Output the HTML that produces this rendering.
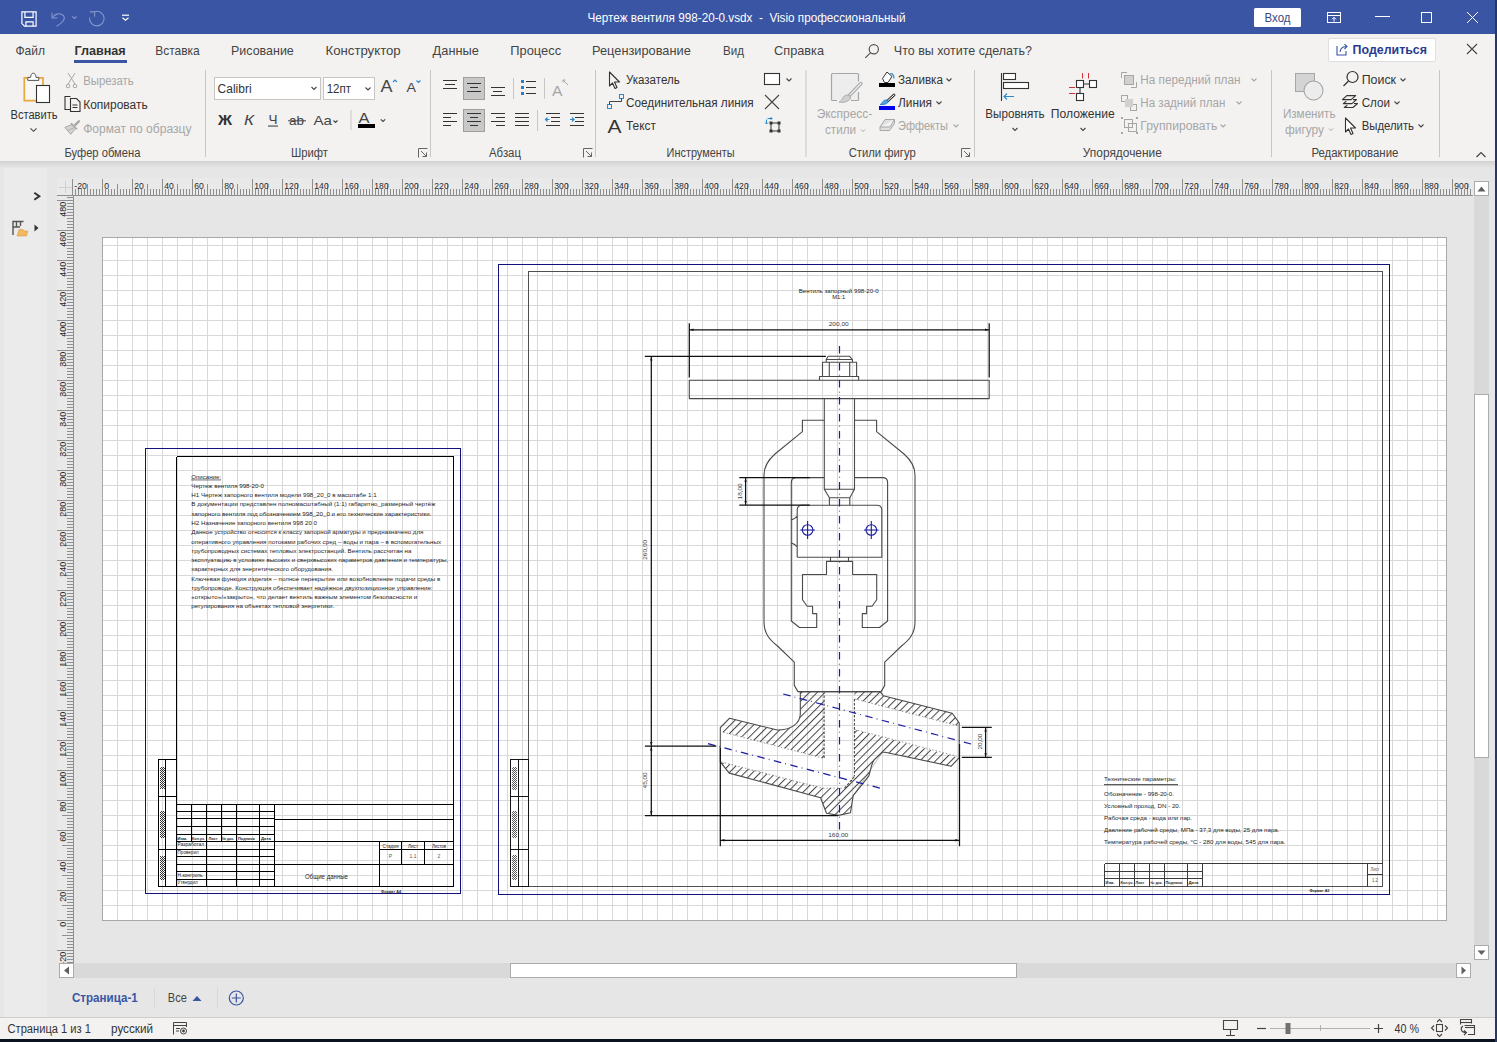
<!DOCTYPE html><html><head><meta charset="utf-8"><style>html,body{margin:0;padding:0;width:1497px;height:1042px;overflow:hidden;background:#E6E6E6}svg{display:block;font-family:"Liberation Sans",sans-serif}</style></head><body><svg width="1497" height="1042" viewBox="0 0 1497 1042"><rect x="0" y="0" width="1497" height="1042" fill="#E6E6E6"/>
<rect x="0" y="0" width="1497" height="34" fill="#3955A3"/>
<rect x="0" y="34" width="1497" height="127" fill="#F3F2F1"/>
<defs><linearGradient id="rsh" x1="0" y1="0" x2="0" y2="1"><stop offset="0" stop-color="#D2D2D2"/><stop offset="1" stop-color="#E6E6E6"/></linearGradient></defs>
<rect x="0" y="161" width="1497" height="7" fill="url(#rsh)"/>
<rect x="4" y="168" width="43" height="849" fill="#EBEBEB"/>
<rect x="0" y="1018" width="1497" height="21" fill="#F3F2F1"/>
<rect x="0" y="1017" width="1497" height="1" fill="#CFCDCB"/>
<rect x="0" y="1039" width="1497" height="3" fill="#0B1220"/>
<rect x="1495" y="0" width="2" height="1042" fill="#283766"/>
<g fill="none" stroke="#FFFFFF" stroke-width="1.2"><path d="M21.9 11.9H36.1V26.1H24.4L21.9 23.6Z"/><path d="M24.9 11.9V17.3H33.1V11.9"/><path d="M25.9 26.1V21.9H33.1V26.1"/></g>
<g fill="none" stroke="#8497CF" stroke-width="1.1"><path d="M52 12.5V18H57.5"/><path d="M52.5 17.5C55 13.5 60.5 12.5 63.3 15.5C65.5 18 64.5 21.5 56.5 26.3"/><path d="M72.2 16.4L74.5 18.4L76.8 16.4"/><path d="M89.8 11.9H94.6V16.8"/><path d="M94.3 11.7A7.3 7.3 0 1 1 89.6 17.5"/></g>
<g fill="none" stroke="#FFFFFF" stroke-width="1.2"><path d="M122 15.2H129"/><path d="M122.5 17.8L125.5 20.3L128.5 17.8"/></g>
<text x="587.5" y="22.2" font-size="12.5" fill="#FFFFFF" textLength="318" lengthAdjust="spacingAndGlyphs" xml:space="preserve">Чертеж вентиля 998-20-0.vsdx  -  Visio профессиональный</text>
<rect x="1254" y="8" width="47" height="19" rx="1.5" fill="#FFFFFF"/>
<text x="1277.5" y="22" font-size="12.5" fill="#3A4A80" text-anchor="middle" textLength="26" lengthAdjust="spacingAndGlyphs">Вход</text>
<g fill="none" stroke="#FFFFFF" stroke-width="1"><rect x="1327.5" y="12.5" width="13" height="10"/><path d="M1327.5 15.5H1340.5"/><path d="M1334 21.5V17.5M1332 19.3L1334 17.3L1336 19.3"/><path d="M1375 16.5H1390"/><rect x="1421.5" y="12.5" width="10" height="10"/><path d="M1467 12L1478 23M1478 12L1467 23"/></g>
<text x="15.4" y="55" font-size="13.5" fill="#444444" textLength="29.5" lengthAdjust="spacingAndGlyphs">Файл</text>
<text x="155.2" y="55" font-size="13.5" fill="#444444" textLength="44.6" lengthAdjust="spacingAndGlyphs">Вставка</text>
<text x="231" y="55" font-size="13.5" fill="#444444" textLength="62.8" lengthAdjust="spacingAndGlyphs">Рисование</text>
<text x="325.5" y="55" font-size="13.5" fill="#444444" textLength="75.2" lengthAdjust="spacingAndGlyphs">Конструктор</text>
<text x="432.6" y="55" font-size="13.5" fill="#444444" textLength="46.3" lengthAdjust="spacingAndGlyphs">Данные</text>
<text x="510.3" y="55" font-size="13.5" fill="#444444" textLength="50.8" lengthAdjust="spacingAndGlyphs">Процесс</text>
<text x="592" y="55" font-size="13.5" fill="#444444" textLength="98.8" lengthAdjust="spacingAndGlyphs">Рецензирование</text>
<text x="723" y="55" font-size="13.5" fill="#444444" textLength="21" lengthAdjust="spacingAndGlyphs">Вид</text>
<text x="774.1" y="55" font-size="13.5" fill="#444444" textLength="49.9" lengthAdjust="spacingAndGlyphs">Справка</text>
<text x="74.4" y="55" font-size="13.5" fill="#333333" textLength="51.3" lengthAdjust="spacingAndGlyphs" font-weight="bold">Главная</text>
<rect x="74" y="60" width="53" height="3" fill="#3955A3"/>
<g fill="none" stroke="#555555" stroke-width="1.2"><circle cx="873.8" cy="49.3" r="4.6"/><path d="M870.6 52.6L865.3 57.9"/></g>
<text x="893.8" y="55" font-size="13" fill="#444444" textLength="138.2" lengthAdjust="spacingAndGlyphs">Что вы хотите сделать?</text>
<rect x="1328.5" y="38.5" width="107" height="23" rx="1.5" fill="#FFFFFF" stroke="#E1DFDD"/>
<g fill="none" stroke="#3955A3" stroke-width="1.1"><path d="M1337 46V55H1346V51"/><path d="M1340 52C1340.5 48 1343 46.5 1346.5 46.5M1344.5 44.2L1347 46.5L1344.5 49"/></g>
<text x="1352.6" y="54.3" font-size="13.4" fill="#2B3C8E" textLength="74.4" lengthAdjust="spacingAndGlyphs" font-weight="bold">Поделиться</text>
<path d="M1467 44L1477 54M1477 44L1467 54" stroke="#444444" stroke-width="1.1" fill="none"/>
<rect x="205.0" y="70" width="1" height="87" fill="#C8C6C4"/>
<rect x="430.0" y="70" width="1" height="87" fill="#C8C6C4"/>
<rect x="595.0" y="70" width="1" height="87" fill="#C8C6C4"/>
<rect x="805.5" y="70" width="1" height="87" fill="#C8C6C4"/>
<rect x="974.0" y="70" width="1" height="87" fill="#C8C6C4"/>
<rect x="1271.0" y="70" width="1" height="87" fill="#C8C6C4"/>
<rect x="1439.0" y="70" width="1" height="87" fill="#C8C6C4"/>
<text x="102.4" y="157" font-size="12" fill="#444444" text-anchor="middle" textLength="76" lengthAdjust="spacingAndGlyphs">Буфер обмена</text>
<text x="309.4" y="157" font-size="12" fill="#444444" text-anchor="middle" textLength="37" lengthAdjust="spacingAndGlyphs">Шрифт</text>
<text x="505" y="157" font-size="12" fill="#444444" text-anchor="middle" textLength="32" lengthAdjust="spacingAndGlyphs">Абзац</text>
<text x="700.6" y="157" font-size="12" fill="#444444" text-anchor="middle" textLength="68" lengthAdjust="spacingAndGlyphs">Инструменты</text>
<text x="882.2" y="157" font-size="12" fill="#444444" text-anchor="middle" textLength="67" lengthAdjust="spacingAndGlyphs">Стили фигур</text>
<text x="1122.3" y="157" font-size="12" fill="#444444" text-anchor="middle" textLength="79" lengthAdjust="spacingAndGlyphs">Упорядочение</text>
<text x="1354.9" y="157" font-size="12" fill="#444444" text-anchor="middle" textLength="87" lengthAdjust="spacingAndGlyphs">Редактирование</text>
<g fill="none" stroke="#666666" stroke-width="1"><path d="M418.5 157.5V148.5H427.5"/><path d="M421 151L426.5 156.5M426.5 152.5V156.5H422.5"/></g>
<g fill="none" stroke="#666666" stroke-width="1"><path d="M583.5 157.5V148.5H592.5"/><path d="M586 151L591.5 156.5M591.5 152.5V156.5H587.5"/></g>
<g fill="none" stroke="#666666" stroke-width="1"><path d="M961.5 157.5V148.5H970.5"/><path d="M964 151L969.5 156.5M969.5 152.5V156.5H965.5"/></g>
<path d="M1476.5 157L1481 152.5L1485.5 157" fill="none" stroke="#444444" stroke-width="1.2"/>
<path d="M24.3 77.8H43V85H36.5V100.7H24.3Z" fill="#F7F7F7"/>
<path d="M29 77.8H24.3V100.7H36.5M37.5 77.8H43V85.5" fill="none" stroke="#E9A83A" stroke-width="1.7"/>
<path d="M27.8 80.4V77.4H30.6C30.8 74.6 31.8 73.2 33.3 73.2C34.8 73.2 35.8 74.6 36 77.4H38.8V80.4Z" fill="#FFFFFF" stroke="#555555" stroke-width="1"/>
<rect x="36.5" y="85.5" width="13" height="17" fill="#FFFFFF" stroke="#333333" stroke-width="1.1"/>
<text x="34" y="119" font-size="12.5" fill="#333333" text-anchor="middle" textLength="47" lengthAdjust="spacingAndGlyphs">Вставить</text>
<path d="M30.5 128.3L33.5 131.3L36.5 128.3" fill="none" stroke="#444444" stroke-width="1.1"/>
<g fill="none" stroke="#A6A6A6" stroke-width="1"><path d="M68 73L75 84M75 73L68 84"/><circle cx="68" cy="86" r="1.8"/><circle cx="75" cy="86" r="1.8"/></g>
<text x="83.2" y="85" font-size="12.5" fill="#A6A6A6" textLength="50.5" lengthAdjust="spacingAndGlyphs">Вырезать</text>
<g fill="none" stroke="#333333" stroke-width="1.1"><path d="M71 109.5H65V96.5H70.5"/><path d="M70.5 98.5H76.5L80 102V111.5H70.5Z"/><path d="M72.5 105H77.5M72.5 107.5H77.5"/></g>
<text x="83.2" y="109" font-size="12.5" fill="#333333" textLength="64.5" lengthAdjust="spacingAndGlyphs">Копировать</text>
<g stroke="#A6A6A6" stroke-linejoin="round" stroke-linecap="round"><path d="M79 121.2L75.3 124.9" stroke-width="2.3" fill="none"/><path d="M71.8 124.6L64.8 127.4L70.8 134.2L75.6 128.4Z" fill="#D4D4D4" stroke-width="1"/><path d="M71.4 123.6L76.6 128.8" stroke-width="1.6" fill="none"/><path d="M67.5 130.5L73.5 128" stroke-width="0.8" fill="none"/></g>
<text x="83.2" y="132.5" font-size="12.5" fill="#A6A6A6" textLength="108.3" lengthAdjust="spacingAndGlyphs">Формат по образцу</text>
<rect x="214.5" y="77.5" width="106" height="22" fill="#FFFFFF" stroke="#C8C6C4"/>
<text x="217.6" y="93" font-size="12.5" fill="#333333" textLength="34" lengthAdjust="spacingAndGlyphs">Calibri</text>
<path d="M311.5 87L314 89.5L316.5 87" fill="none" stroke="#444444" stroke-width="1.1"/>
<rect x="323.5" y="77.5" width="51" height="22" fill="#FFFFFF" stroke="#C8C6C4"/>
<text x="326.7" y="93" font-size="12.5" fill="#333333" textLength="24.3" lengthAdjust="spacingAndGlyphs">12пт</text>
<path d="M365.5 87.5L368 90L370.5 87.5" fill="none" stroke="#444444" stroke-width="1.1"/>
<text x="380.5" y="92" font-size="17" fill="#444444" textLength="12" lengthAdjust="spacingAndGlyphs">A</text>
<path d="M393 82L395 80L397 82" fill="none" stroke="#2B8AD0" stroke-width="1.1"/>
<text x="406.5" y="92.2" font-size="13.5" fill="#444444" textLength="9.5" lengthAdjust="spacingAndGlyphs">A</text>
<path d="M416.5 80.5L418.5 82.5L420.5 80.5" fill="none" stroke="#2B8AD0" stroke-width="1.1"/>
<text x="218" y="124.5" font-size="14" fill="#333333" textLength="14" lengthAdjust="spacingAndGlyphs" font-weight="bold">Ж</text>
<text x="244" y="124.5" font-size="14" fill="#444444" textLength="10" lengthAdjust="spacingAndGlyphs" font-style="italic">К</text>
<text x="268.5" y="123.5" font-size="13.5" fill="#444444" textLength="9" lengthAdjust="spacingAndGlyphs">Ч</text>
<rect x="268" y="125.5" width="10" height="1.1" fill="#444444"/>
<text x="289" y="124.5" font-size="13.5" fill="#444444" textLength="15" lengthAdjust="spacingAndGlyphs">ab</text>
<rect x="288" y="120.3" width="18" height="1" fill="#444444"/>
<text x="313.5" y="124.5" font-size="13.5" fill="#444444" textLength="18.5" lengthAdjust="spacingAndGlyphs">Aa</text>
<path d="M333.5 120.5L335.5 122.5L337.5 120.5" fill="none" stroke="#444444" stroke-width="1.1"/>
<rect x="350.5" y="110" width="1" height="20" fill="#C8C6C4"/>
<text x="358.5" y="123" font-size="14" fill="#444444" textLength="11" lengthAdjust="spacingAndGlyphs">A</text>
<rect x="358" y="124" width="17" height="4" fill="#000000"/>
<path d="M380.8 119.3L383 121.5L385.2 119.3" fill="none" stroke="#444444" stroke-width="1.1"/>
<rect x="463.5" y="77.5" width="21" height="22" fill="#C8C8C8" stroke="#9E9E9E"/>
<rect x="463.5" y="109.5" width="21" height="22" fill="#C8C8C8" stroke="#9E9E9E"/>
<path d="M443 80.5H457M445 84.5H454.5M443 88.5H457M467 83.5H481M470 87.5H478M467 91.5H481M491 87.5H505M493 91.5H502M491 95.5H505M443 113.5H457M443 117.5H451M443 121.5H457M443 125.5H451M467 113.5H481M470 117.5H478M467 121.5H481M470 125.5H478M491 113.5H505M496 117.5H505M491 121.5H505M496 125.5H505M515 113.5H529M515 117.5H529M515 121.5H529M515 125.5H529M526 81.5H536M526 87.5H536M526 93.5H536M546 113.5H560M551 117.5H560M551 121.5H560M546 125.5H560M570 113.5H584M575 117.5H584M575 121.5H584M570 125.5H584" stroke="#333333" stroke-width="1" fill="none" shape-rendering="crispEdges"/>
<g fill="#2B7FC4"><rect x="521" y="80" width="3" height="3"/><rect x="521" y="86" width="3" height="3"/><rect x="521" y="92" width="3" height="3"/></g>
<g fill="none" stroke="#2B8AD0" stroke-width="1.2"><path d="M549.5 119.5H545.5M547.5 117.5L545.5 119.5L547.5 121.5"/><path d="M570 119.5H574M572 117.5L574 119.5L572 121.5"/></g>
<rect x="513" y="78" width="1" height="21" fill="#C8C6C4"/><rect x="544" y="78" width="1" height="21" fill="#C8C6C4"/><rect x="537" y="110" width="1" height="21" fill="#C8C6C4"/>
<text x="552" y="96" font-size="14" fill="#A6A6A6" textLength="10.5" lengthAdjust="spacingAndGlyphs">A</text>
<path d="M563 80L565.5 80M563 80L563 82.5M563 80L568 85" fill="none" stroke="#A6A6A6" stroke-width="1"/>
<path d="M609.5 72V86L612.5 83L615 88.5L617 87.5L614.5 82H619.5Z" fill="none" stroke="#333333" stroke-width="1.1" stroke-linejoin="round"/>
<text x="625.9" y="84" font-size="12.5" fill="#333333" textLength="53.8" lengthAdjust="spacingAndGlyphs">Указатель</text>
<g fill="none" stroke="#2B8AD0" stroke-width="1"><rect x="607.5" y="104.5" width="4" height="4"/><rect x="619.5" y="94.5" width="4" height="4"/></g>
<path d="M609.5 104.5V101.5H621.5V98.5" fill="none" stroke="#444444" stroke-width="1"/>
<text x="626" y="107" font-size="12.5" fill="#333333" textLength="127.7" lengthAdjust="spacingAndGlyphs">Соединительная линия</text>
<text x="607.5" y="133" font-size="19" fill="#333333" textLength="14" lengthAdjust="spacingAndGlyphs">A</text>
<text x="626" y="130" font-size="12.5" fill="#333333" textLength="30" lengthAdjust="spacingAndGlyphs">Текст</text>
<rect x="764.5" y="73.5" width="15" height="11" fill="#FFFFFF" stroke="#333333" stroke-width="1.1"/>
<path d="M786.5 78.5L789 81L791.5 78.5" fill="none" stroke="#444444" stroke-width="1.1"/>
<path d="M765 95L779 109M779 95L765 109" fill="none" stroke="#444444" stroke-width="1.1"/>
<rect x="771" y="123" width="8" height="8" fill="none" stroke="#333333" stroke-width="1"/>
<g fill="#333333"><rect x="769.5" y="121.5" width="3" height="3"/><rect x="777.5" y="121.5" width="3" height="3"/><rect x="769.5" y="129.5" width="3" height="3"/><rect x="777.5" y="129.5" width="3" height="3"/></g>
<path d="M766.5 124V119.5M765 122.5L766.5 124L768 122.5M767.5 118.5H772M770.5 117L772 118.5L770.5 120" fill="none" stroke="#2B8AD0" stroke-width="1"/>
<rect x="831.5" y="73.5" width="27" height="27" rx="1" fill="#EDEDED" stroke="none"/>
<path d="M837 100.5H832.5Q831.5 100.5 831.5 99.5V74.5Q831.5 73.5 832.5 73.5H857.5Q858.5 73.5 858.5 74.5V81.5M858.5 92V99.5Q858.5 100.5 857.5 100.5H851" fill="none" stroke="#A6A6A6" stroke-width="1.2"/>
<path d="M861 83.5L849.5 95.3" stroke="#A6A6A6" stroke-width="3.4" stroke-linecap="round" fill="none"/><path d="M861 83.5L849.5 95.3" stroke="#F2F2F2" stroke-width="1.2" stroke-linecap="round" fill="none"/>
<path d="M850 96C847 93.5 843 96 842 99.5C841.5 101 840 101.5 839 102C843 103 848 102 850.5 98.5Z" fill="#CFCFCF" stroke="#A6A6A6" stroke-width="0.9"/>
<text x="816.7" y="118.2" font-size="12.5" fill="#A6A6A6" textLength="55.5" lengthAdjust="spacingAndGlyphs">Экспресс-</text>
<text x="825" y="134" font-size="12.5" fill="#A6A6A6" textLength="31" lengthAdjust="spacingAndGlyphs">стили</text>
<path d="M861 129.5L863 131.5L865 129.5" fill="none" stroke="#A6A6A6" stroke-width="1"/>
<path d="M882.5 78.5L887 72L892 76.5L888 82.5H884.5Z" fill="#FFFFFF" stroke="#333333" stroke-width="1"/><path d="M890 74C892.5 73 894 75 894 78.5" fill="none" stroke="#2B8AD0" stroke-width="1.2"/>
<rect x="879" y="83" width="16" height="4" fill="#000000"/>
<text x="898" y="84" font-size="12.5" fill="#333333" textLength="45" lengthAdjust="spacingAndGlyphs">Заливка</text>
<path d="M946.5 78.5L949 81L951.5 78.5" fill="none" stroke="#444444" stroke-width="1.1"/>
<path d="M894 95L887 101.5" stroke="#333333" stroke-width="2.8" stroke-linecap="round" fill="none"/><path d="M894 95L887 101.5" stroke="#FFFFFF" stroke-width="1" stroke-linecap="round" fill="none"/><path d="M887.8 100.5C885.5 99 882.5 101 882 103C881.5 104 880.5 104.3 880 104.5C883 105 886.5 104.5 888.3 102Z" fill="#4BA3E3" stroke="#1E6FB5" stroke-width="0.7"/>
<rect x="879" y="106" width="16" height="4" fill="#0000EE"/>
<text x="898" y="106.5" font-size="12.5" fill="#333333" textLength="34" lengthAdjust="spacingAndGlyphs">Линия</text>
<path d="M936.5 101.5L939 104L941.5 101.5" fill="none" stroke="#444444" stroke-width="1.1"/>
<path d="M880 127L885 119.5H894.5L890 127Z M880 127V130.5H889.5L894.5 123.5V119.5" fill="#E0E0E0" stroke="#A6A6A6" stroke-width="1"/>
<text x="898" y="130" font-size="12.5" fill="#A6A6A6" textLength="50" lengthAdjust="spacingAndGlyphs">Эффекты</text>
<path d="M953.5 124.5L956 127L958.5 124.5" fill="none" stroke="#A6A6A6" stroke-width="1.1"/>
<path d="M1001.5 73V101" stroke="#333333" stroke-width="1.1"/>
<rect x="1003.5" y="73.5" width="12" height="6" fill="#FFFFFF" stroke="#333333" stroke-width="1.1"/><rect x="1003.5" y="82.5" width="25" height="6" fill="#FFFFFF" stroke="#333333" stroke-width="1.1"/>
<path d="M1014 96.5H1004M1007 93.5L1004 96.5L1007 99.5" fill="none" stroke="#2B8AD0" stroke-width="1.1"/>
<text x="1015" y="117.7" font-size="12.5" fill="#333333" text-anchor="middle" textLength="59.3" lengthAdjust="spacingAndGlyphs">Выровнять</text>
<path d="M1012.5 128L1015 130.5L1017.5 128" fill="none" stroke="#444444" stroke-width="1.1"/>
<g fill="#FFFFFF" stroke="#333333" stroke-width="1.1"><rect x="1076.5" y="80.5" width="7" height="7"/><rect x="1089.5" y="80.5" width="7" height="7"/><rect x="1076.5" y="93.5" width="7" height="7"/></g>
<path d="M1083.5 84H1089.5M1080 87.5V93.5" stroke="#333333" stroke-width="1.1" fill="none"/>
<path d="M1082.5 73V78.5M1088.5 73V78.5M1069 87.5H1075M1069 93.5H1075" stroke="#D13438" stroke-width="1" fill="none"/>
<text x="1082.8" y="117.7" font-size="12.5" fill="#333333" text-anchor="middle" textLength="64" lengthAdjust="spacingAndGlyphs">Положение</text>
<path d="M1080.5 128L1083 130.5L1085.5 128" fill="none" stroke="#444444" stroke-width="1.1"/>
<g fill="none" stroke="#A6A6A6" stroke-width="1"><path d="M1121.5 78V72.5H1127M1131 87.5H1136.5V82"/><rect x="1124.5" y="75.5" width="9" height="9" fill="#D0D0D0"/></g>
<text x="1140.3" y="83.6" font-size="12.5" fill="#A6A6A6" textLength="100.2" lengthAdjust="spacingAndGlyphs">На передний план</text>
<path d="M1251.5 78.5L1254 81L1256.5 78.5" fill="none" stroke="#A6A6A6" stroke-width="1.1"/>
<g fill="none" stroke="#A6A6A6" stroke-width="1"><rect x="1121.5" y="95.5" width="6" height="6"/><rect x="1130.5" y="104.5" width="6" height="6"/><rect x="1125" y="99" width="8" height="8" fill="#D0D0D0" stroke="none"/></g>
<text x="1140.3" y="106.5" font-size="12.5" fill="#A6A6A6" textLength="85" lengthAdjust="spacingAndGlyphs">На задний план</text>
<path d="M1236.5 101.5L1239 104L1241.5 101.5" fill="none" stroke="#A6A6A6" stroke-width="1.1"/>
<g fill="none" stroke="#A6A6A6" stroke-width="1"><rect x="1124.5" y="119.5" width="8" height="8"/><rect x="1128.5" y="123.5" width="8" height="8"/></g><g fill="#A6A6A6"><rect x="1121" y="117" width="2" height="2"/><rect x="1136" y="117" width="2" height="2"/><rect x="1121" y="132" width="2" height="2"/><rect x="1136" y="132" width="2" height="2"/></g>
<text x="1140.3" y="129.5" font-size="12.5" fill="#A6A6A6" textLength="77" lengthAdjust="spacingAndGlyphs">Группировать</text>
<path d="M1220.5 124.5L1223 127L1225.5 124.5" fill="none" stroke="#A6A6A6" stroke-width="1.1"/>
<rect x="1295.5" y="73.5" width="19" height="18" fill="#D4D4D4" stroke="#A6A6A6" stroke-width="1"/>
<circle cx="1313.5" cy="90.5" r="9.5" fill="#ECECEC" stroke="#A6A6A6" stroke-width="1.1"/>
<text x="1282.9" y="118.2" font-size="12.5" fill="#A6A6A6" textLength="52.6" lengthAdjust="spacingAndGlyphs">Изменить</text>
<text x="1285" y="134" font-size="12.5" fill="#A6A6A6" textLength="39" lengthAdjust="spacingAndGlyphs">фигуру</text>
<path d="M1329 128.5L1331 130.5L1333 128.5" fill="none" stroke="#A6A6A6" stroke-width="1"/>
<g fill="none" stroke="#333333" stroke-width="1.2"><circle cx="1352.5" cy="77" r="5.5"/><path d="M1348.5 81L1343.5 86"/></g>
<text x="1361.7" y="84" font-size="12.5" fill="#333333" textLength="34.3" lengthAdjust="spacingAndGlyphs">Поиск</text>
<path d="M1400.5 78.5L1403 81L1405.5 78.5" fill="none" stroke="#444444" stroke-width="1.1"/>
<g fill="none" stroke="#333333" stroke-width="1.1" stroke-linejoin="round"><path d="M1346.8 95.6H1355.7L1351.1 99.6H1342.4Z"/><path d="M1353 99.6H1356.5L1352 103.6H1343.3L1346.3 101.3"/><path d="M1354 103.5H1357.5L1353 107.5H1344.3L1347.3 105.3"/></g>
<text x="1361.7" y="106.5" font-size="12.5" fill="#333333" textLength="28.3" lengthAdjust="spacingAndGlyphs">Слои</text>
<path d="M1394.5 101.5L1397 104L1399.5 101.5" fill="none" stroke="#444444" stroke-width="1.1"/>
<path d="M1345.5 118V132L1348.5 129L1351 134.5L1353 133.5L1350.5 128H1355.5Z" fill="#FFFFFF" stroke="#333333" stroke-width="1.1" stroke-linejoin="round"/>
<text x="1361.7" y="129.7" font-size="12.5" fill="#333333" textLength="52.3" lengthAdjust="spacingAndGlyphs">Выделить</text>
<path d="M1418.5 124.5L1421 127L1423.5 124.5" fill="none" stroke="#444444" stroke-width="1.1"/>
<path d="M34.3 192.8L39.3 196.3L34.3 199.8" fill="none" stroke="#333333" stroke-width="2"/>
<g fill="none" stroke="#555555" stroke-width="1.4"><path d="M13 235V221.5H23.5"/><path d="M13 227H20M16.5 221.5V227M20.5 221.5V226"/></g>
<path d="M17 236L19 229.5H23L24 231H28L26.5 236Z" fill="#F0B860" stroke="#E0A040" stroke-width="0.6"/>
<path d="M34.5 224.5L38.5 228L34.5 231.5Z" fill="#333333"/>
<text x="72" y="1002" font-size="12.5" fill="#3955A3" textLength="65.7" lengthAdjust="spacingAndGlyphs" font-weight="bold">Страница-1</text>
<rect x="154" y="988" width="1" height="20" fill="#D8D8D8"/>
<text x="167.8" y="1002" font-size="12.5" fill="#444444" textLength="19" lengthAdjust="spacingAndGlyphs">Все</text>
<path d="M192.5 1001L197 996L201.5 1001Z" fill="#3955A3"/>
<rect x="217" y="988" width="1" height="20" fill="#D8D8D8"/>
<g fill="none" stroke="#3955A3" stroke-width="1.2"><circle cx="236.3" cy="998" r="7"/><path d="M236.3 993.5V1002.5M231.8 998H240.8"/></g>
<text x="7.5" y="1033" font-size="12.5" fill="#333333" textLength="83.5" lengthAdjust="spacingAndGlyphs">Страница 1 из 1</text>
<text x="111" y="1033" font-size="12.5" fill="#333333" textLength="42" lengthAdjust="spacingAndGlyphs">русский</text>
<g fill="none" stroke="#444444" stroke-width="1"><path d="M173.5 1034.5V1022.5H186.5V1027"/><path d="M173.5 1025.5H186.5"/><path d="M176 1028.5H180M176 1031H179"/><circle cx="183.5" cy="1031" r="3"/></g><circle cx="183.5" cy="1031" r="1.4" fill="#444444"/>
<g fill="none" stroke="#444444" stroke-width="1.1"><path d="M1223.5 1020.5H1237.5V1029.5H1223.5Z"/><path d="M1230.5 1029.5V1035.5M1226 1035.5H1235"/></g>
<path d="M1257 1028.5H1266" stroke="#444444" stroke-width="1.2"/>
<rect x="1270" y="1028" width="100" height="1" fill="#B0B0B0"/>
<rect x="1320" y="1025" width="1" height="6" fill="#B0B0B0"/>
<rect x="1285.5" y="1023" width="5" height="11" fill="#707070"/>
<path d="M1374 1028.5H1383M1378.5 1024V1033" stroke="#444444" stroke-width="1.2"/>
<text x="1394.5" y="1033" font-size="12.5" fill="#333333" textLength="24.5" lengthAdjust="spacingAndGlyphs">40 %</text>
<g fill="none" stroke="#444444" stroke-width="1.1"><rect x="1436.5" y="1024.5" width="6" height="7"/><path d="M1437 1022L1439.5 1019.5L1442 1022M1437 1034L1439.5 1036.5L1442 1034M1434 1025.5L1431.5 1028L1434 1030.5M1445 1025.5L1447.5 1028L1445 1030.5"/></g>
<g fill="none" stroke="#444444" stroke-width="1.1"><path d="M1460.5 1024.5V1019.5H1471.5V1023.5"/><path d="M1461 1022.5H1471"/><path d="M1464.5 1025.5H1474.5V1034.5H1468"/><path d="M1465 1027.5H1474"/><path d="M1463 1026C1460 1028 1460.5 1032.5 1466.5 1032.5M1464 1030.5L1466.5 1032.5L1464 1035"/></g>
<rect x="102" y="237" width="1344" height="683" fill="#FFFFFF"/>
<path d="M117.5 237V920M132.5 237V920M147.5 237V920M162.5 237V920M177.5 237V920M192.5 237V920M207.5 237V920M222.5 237V920M237.5 237V920M252.5 237V920M267.5 237V920M282.5 237V920M297.5 237V920M312.5 237V920M327.5 237V920M342.5 237V920M357.5 237V920M372.5 237V920M387.5 237V920M402.5 237V920M417.5 237V920M432.5 237V920M447.5 237V920M462.5 237V920M477.5 237V920M492.5 237V920M507.5 237V920M522.5 237V920M537.5 237V920M552.5 237V920M567.5 237V920M582.5 237V920M597.5 237V920M612.5 237V920M627.5 237V920M642.5 237V920M657.5 237V920M672.5 237V920M687.5 237V920M702.5 237V920M717.5 237V920M732.5 237V920M747.5 237V920M762.5 237V920M777.5 237V920M792.5 237V920M807.5 237V920M822.5 237V920M837.5 237V920M852.5 237V920M867.5 237V920M882.5 237V920M897.5 237V920M912.5 237V920M927.5 237V920M942.5 237V920M957.5 237V920M972.5 237V920M987.5 237V920M1002.5 237V920M1017.5 237V920M1032.5 237V920M1047.5 237V920M1062.5 237V920M1077.5 237V920M1092.5 237V920M1107.5 237V920M1122.5 237V920M1137.5 237V920M1152.5 237V920M1167.5 237V920M1182.5 237V920M1197.5 237V920M1212.5 237V920M1227.5 237V920M1242.5 237V920M1257.5 237V920M1272.5 237V920M1287.5 237V920M1302.5 237V920M1317.5 237V920M1332.5 237V920M1347.5 237V920M1362.5 237V920M1377.5 237V920M1392.5 237V920M1407.5 237V920M1422.5 237V920M1437.5 237V920M102 905.5H1446M102 890.5H1446M102 875.5H1446M102 860.5H1446M102 845.5H1446M102 830.5H1446M102 815.5H1446M102 800.5H1446M102 785.5H1446M102 770.5H1446M102 755.5H1446M102 740.5H1446M102 725.5H1446M102 710.5H1446M102 695.5H1446M102 680.5H1446M102 665.5H1446M102 650.5H1446M102 635.5H1446M102 620.5H1446M102 605.5H1446M102 590.5H1446M102 575.5H1446M102 560.5H1446M102 545.5H1446M102 530.5H1446M102 515.5H1446M102 500.5H1446M102 485.5H1446M102 470.5H1446M102 455.5H1446M102 440.5H1446M102 425.5H1446M102 410.5H1446M102 395.5H1446M102 380.5H1446M102 365.5H1446M102 350.5H1446M102 335.5H1446M102 320.5H1446M102 305.5H1446M102 290.5H1446M102 275.5H1446M102 260.5H1446M102 245.5H1446" stroke="#D9D9D9" stroke-width="1" fill="none" shape-rendering="crispEdges"/>
<rect x="102.5" y="237.5" width="1344" height="683" fill="none" stroke="#A8A8A8" stroke-width="1" shape-rendering="crispEdges"/>
<rect x="57" y="178" width="1416" height="17" fill="#E9E9E9"/>
<rect x="57" y="195" width="17" height="767" fill="#E9E9E9"/>
<path d="M72.5 179V195M75.5 189V195M78.5 189V195M81.5 189V195M84.5 189V195M87.5 184V195M90.5 189V195M93.5 189V195M96.5 189V195M99.5 189V195M102.5 179V195M105.5 189V195M108.5 189V195M111.5 189V195M114.5 189V195M117.5 184V195M120.5 189V195M123.5 189V195M126.5 189V195M129.5 189V195M132.5 179V195M135.5 189V195M138.5 189V195M141.5 189V195M144.5 189V195M147.5 184V195M150.5 189V195M153.5 189V195M156.5 189V195M159.5 189V195M162.5 179V195M165.5 189V195M168.5 189V195M171.5 189V195M174.5 189V195M177.5 184V195M180.5 189V195M183.5 189V195M186.5 189V195M189.5 189V195M192.5 179V195M195.5 189V195M198.5 189V195M201.5 189V195M204.5 189V195M207.5 184V195M210.5 189V195M213.5 189V195M216.5 189V195M219.5 189V195M222.5 179V195M225.5 189V195M228.5 189V195M231.5 189V195M234.5 189V195M237.5 184V195M240.5 189V195M243.5 189V195M246.5 189V195M249.5 189V195M252.5 179V195M255.5 189V195M258.5 189V195M261.5 189V195M264.5 189V195M267.5 184V195M270.5 189V195M273.5 189V195M276.5 189V195M279.5 189V195M282.5 179V195M285.5 189V195M288.5 189V195M291.5 189V195M294.5 189V195M297.5 184V195M300.5 189V195M303.5 189V195M306.5 189V195M309.5 189V195M312.5 179V195M315.5 189V195M318.5 189V195M321.5 189V195M324.5 189V195M327.5 184V195M330.5 189V195M333.5 189V195M336.5 189V195M339.5 189V195M342.5 179V195M345.5 189V195M348.5 189V195M351.5 189V195M354.5 189V195M357.5 184V195M360.5 189V195M363.5 189V195M366.5 189V195M369.5 189V195M372.5 179V195M375.5 189V195M378.5 189V195M381.5 189V195M384.5 189V195M387.5 184V195M390.5 189V195M393.5 189V195M396.5 189V195M399.5 189V195M402.5 179V195M405.5 189V195M408.5 189V195M411.5 189V195M414.5 189V195M417.5 184V195M420.5 189V195M423.5 189V195M426.5 189V195M429.5 189V195M432.5 179V195M435.5 189V195M438.5 189V195M441.5 189V195M444.5 189V195M447.5 184V195M450.5 189V195M453.5 189V195M456.5 189V195M459.5 189V195M462.5 179V195M465.5 189V195M468.5 189V195M471.5 189V195M474.5 189V195M477.5 184V195M480.5 189V195M483.5 189V195M486.5 189V195M489.5 189V195M492.5 179V195M495.5 189V195M498.5 189V195M501.5 189V195M504.5 189V195M507.5 184V195M510.5 189V195M513.5 189V195M516.5 189V195M519.5 189V195M522.5 179V195M525.5 189V195M528.5 189V195M531.5 189V195M534.5 189V195M537.5 184V195M540.5 189V195M543.5 189V195M546.5 189V195M549.5 189V195M552.5 179V195M555.5 189V195M558.5 189V195M561.5 189V195M564.5 189V195M567.5 184V195M570.5 189V195M573.5 189V195M576.5 189V195M579.5 189V195M582.5 179V195M585.5 189V195M588.5 189V195M591.5 189V195M594.5 189V195M597.5 184V195M600.5 189V195M603.5 189V195M606.5 189V195M609.5 189V195M612.5 179V195M615.5 189V195M618.5 189V195M621.5 189V195M624.5 189V195M627.5 184V195M630.5 189V195M633.5 189V195M636.5 189V195M639.5 189V195M642.5 179V195M645.5 189V195M648.5 189V195M651.5 189V195M654.5 189V195M657.5 184V195M660.5 189V195M663.5 189V195M666.5 189V195M669.5 189V195M672.5 179V195M675.5 189V195M678.5 189V195M681.5 189V195M684.5 189V195M687.5 184V195M690.5 189V195M693.5 189V195M696.5 189V195M699.5 189V195M702.5 179V195M705.5 189V195M708.5 189V195M711.5 189V195M714.5 189V195M717.5 184V195M720.5 189V195M723.5 189V195M726.5 189V195M729.5 189V195M732.5 179V195M735.5 189V195M738.5 189V195M741.5 189V195M744.5 189V195M747.5 184V195M750.5 189V195M753.5 189V195M756.5 189V195M759.5 189V195M762.5 179V195M765.5 189V195M768.5 189V195M771.5 189V195M774.5 189V195M777.5 184V195M780.5 189V195M783.5 189V195M786.5 189V195M789.5 189V195M792.5 179V195M795.5 189V195M798.5 189V195M801.5 189V195M804.5 189V195M807.5 184V195M810.5 189V195M813.5 189V195M816.5 189V195M819.5 189V195M822.5 179V195M825.5 189V195M828.5 189V195M831.5 189V195M834.5 189V195M837.5 184V195M840.5 189V195M843.5 189V195M846.5 189V195M849.5 189V195M852.5 179V195M855.5 189V195M858.5 189V195M861.5 189V195M864.5 189V195M867.5 184V195M870.5 189V195M873.5 189V195M876.5 189V195M879.5 189V195M882.5 179V195M885.5 189V195M888.5 189V195M891.5 189V195M894.5 189V195M897.5 184V195M900.5 189V195M903.5 189V195M906.5 189V195M909.5 189V195M912.5 179V195M915.5 189V195M918.5 189V195M921.5 189V195M924.5 189V195M927.5 184V195M930.5 189V195M933.5 189V195M936.5 189V195M939.5 189V195M942.5 179V195M945.5 189V195M948.5 189V195M951.5 189V195M954.5 189V195M957.5 184V195M960.5 189V195M963.5 189V195M966.5 189V195M969.5 189V195M972.5 179V195M975.5 189V195M978.5 189V195M981.5 189V195M984.5 189V195M987.5 184V195M990.5 189V195M993.5 189V195M996.5 189V195M999.5 189V195M1002.5 179V195M1005.5 189V195M1008.5 189V195M1011.5 189V195M1014.5 189V195M1017.5 184V195M1020.5 189V195M1023.5 189V195M1026.5 189V195M1029.5 189V195M1032.5 179V195M1035.5 189V195M1038.5 189V195M1041.5 189V195M1044.5 189V195M1047.5 184V195M1050.5 189V195M1053.5 189V195M1056.5 189V195M1059.5 189V195M1062.5 179V195M1065.5 189V195M1068.5 189V195M1071.5 189V195M1074.5 189V195M1077.5 184V195M1080.5 189V195M1083.5 189V195M1086.5 189V195M1089.5 189V195M1092.5 179V195M1095.5 189V195M1098.5 189V195M1101.5 189V195M1104.5 189V195M1107.5 184V195M1110.5 189V195M1113.5 189V195M1116.5 189V195M1119.5 189V195M1122.5 179V195M1125.5 189V195M1128.5 189V195M1131.5 189V195M1134.5 189V195M1137.5 184V195M1140.5 189V195M1143.5 189V195M1146.5 189V195M1149.5 189V195M1152.5 179V195M1155.5 189V195M1158.5 189V195M1161.5 189V195M1164.5 189V195M1167.5 184V195M1170.5 189V195M1173.5 189V195M1176.5 189V195M1179.5 189V195M1182.5 179V195M1185.5 189V195M1188.5 189V195M1191.5 189V195M1194.5 189V195M1197.5 184V195M1200.5 189V195M1203.5 189V195M1206.5 189V195M1209.5 189V195M1212.5 179V195M1215.5 189V195M1218.5 189V195M1221.5 189V195M1224.5 189V195M1227.5 184V195M1230.5 189V195M1233.5 189V195M1236.5 189V195M1239.5 189V195M1242.5 179V195M1245.5 189V195M1248.5 189V195M1251.5 189V195M1254.5 189V195M1257.5 184V195M1260.5 189V195M1263.5 189V195M1266.5 189V195M1269.5 189V195M1272.5 179V195M1275.5 189V195M1278.5 189V195M1281.5 189V195M1284.5 189V195M1287.5 184V195M1290.5 189V195M1293.5 189V195M1296.5 189V195M1299.5 189V195M1302.5 179V195M1305.5 189V195M1308.5 189V195M1311.5 189V195M1314.5 189V195M1317.5 184V195M1320.5 189V195M1323.5 189V195M1326.5 189V195M1329.5 189V195M1332.5 179V195M1335.5 189V195M1338.5 189V195M1341.5 189V195M1344.5 189V195M1347.5 184V195M1350.5 189V195M1353.5 189V195M1356.5 189V195M1359.5 189V195M1362.5 179V195M1365.5 189V195M1368.5 189V195M1371.5 189V195M1374.5 189V195M1377.5 184V195M1380.5 189V195M1383.5 189V195M1386.5 189V195M1389.5 189V195M1392.5 179V195M1395.5 189V195M1398.5 189V195M1401.5 189V195M1404.5 189V195M1407.5 184V195M1410.5 189V195M1413.5 189V195M1416.5 189V195M1419.5 189V195M1422.5 179V195M1425.5 189V195M1428.5 189V195M1431.5 189V195M1434.5 189V195M1437.5 184V195M1440.5 189V195M1443.5 189V195M1446.5 189V195M1449.5 189V195M1452.5 179V195M1455.5 189V195M1458.5 189V195M1461.5 189V195M1464.5 189V195M1467.5 184V195M1470.5 189V195M57 195.5H1473M67 962.5H74M67 959.5H74M67 956.5H74M67 953.5H74M57 950.5H74M67 947.5H74M67 944.5H74M67 941.5H74M67 938.5H74M62 935.5H74M67 932.5H74M67 929.5H74M67 926.5H74M67 923.5H74M57 920.5H74M67 917.5H74M67 914.5H74M67 911.5H74M67 908.5H74M62 905.5H74M67 902.5H74M67 899.5H74M67 896.5H74M67 893.5H74M57 890.5H74M67 887.5H74M67 884.5H74M67 881.5H74M67 878.5H74M62 875.5H74M67 872.5H74M67 869.5H74M67 866.5H74M67 863.5H74M57 860.5H74M67 857.5H74M67 854.5H74M67 851.5H74M67 848.5H74M62 845.5H74M67 842.5H74M67 839.5H74M67 836.5H74M67 833.5H74M57 830.5H74M67 827.5H74M67 824.5H74M67 821.5H74M67 818.5H74M62 815.5H74M67 812.5H74M67 809.5H74M67 806.5H74M67 803.5H74M57 800.5H74M67 797.5H74M67 794.5H74M67 791.5H74M67 788.5H74M62 785.5H74M67 782.5H74M67 779.5H74M67 776.5H74M67 773.5H74M57 770.5H74M67 767.5H74M67 764.5H74M67 761.5H74M67 758.5H74M62 755.5H74M67 752.5H74M67 749.5H74M67 746.5H74M67 743.5H74M57 740.5H74M67 737.5H74M67 734.5H74M67 731.5H74M67 728.5H74M62 725.5H74M67 722.5H74M67 719.5H74M67 716.5H74M67 713.5H74M57 710.5H74M67 707.5H74M67 704.5H74M67 701.5H74M67 698.5H74M62 695.5H74M67 692.5H74M67 689.5H74M67 686.5H74M67 683.5H74M57 680.5H74M67 677.5H74M67 674.5H74M67 671.5H74M67 668.5H74M62 665.5H74M67 662.5H74M67 659.5H74M67 656.5H74M67 653.5H74M57 650.5H74M67 647.5H74M67 644.5H74M67 641.5H74M67 638.5H74M62 635.5H74M67 632.5H74M67 629.5H74M67 626.5H74M67 623.5H74M57 620.5H74M67 617.5H74M67 614.5H74M67 611.5H74M67 608.5H74M62 605.5H74M67 602.5H74M67 599.5H74M67 596.5H74M67 593.5H74M57 590.5H74M67 587.5H74M67 584.5H74M67 581.5H74M67 578.5H74M62 575.5H74M67 572.5H74M67 569.5H74M67 566.5H74M67 563.5H74M57 560.5H74M67 557.5H74M67 554.5H74M67 551.5H74M67 548.5H74M62 545.5H74M67 542.5H74M67 539.5H74M67 536.5H74M67 533.5H74M57 530.5H74M67 527.5H74M67 524.5H74M67 521.5H74M67 518.5H74M62 515.5H74M67 512.5H74M67 509.5H74M67 506.5H74M67 503.5H74M57 500.5H74M67 497.5H74M67 494.5H74M67 491.5H74M67 488.5H74M62 485.5H74M67 482.5H74M67 479.5H74M67 476.5H74M67 473.5H74M57 470.5H74M67 467.5H74M67 464.5H74M67 461.5H74M67 458.5H74M62 455.5H74M67 452.5H74M67 449.5H74M67 446.5H74M67 443.5H74M57 440.5H74M67 437.5H74M67 434.5H74M67 431.5H74M67 428.5H74M62 425.5H74M67 422.5H74M67 419.5H74M67 416.5H74M67 413.5H74M57 410.5H74M67 407.5H74M67 404.5H74M67 401.5H74M67 398.5H74M62 395.5H74M67 392.5H74M67 389.5H74M67 386.5H74M67 383.5H74M57 380.5H74M67 377.5H74M67 374.5H74M67 371.5H74M67 368.5H74M62 365.5H74M67 362.5H74M67 359.5H74M67 356.5H74M67 353.5H74M57 350.5H74M67 347.5H74M67 344.5H74M67 341.5H74M67 338.5H74M62 335.5H74M67 332.5H74M67 329.5H74M67 326.5H74M67 323.5H74M57 320.5H74M67 317.5H74M67 314.5H74M67 311.5H74M67 308.5H74M62 305.5H74M67 302.5H74M67 299.5H74M67 296.5H74M67 293.5H74M57 290.5H74M67 287.5H74M67 284.5H74M67 281.5H74M67 278.5H74M62 275.5H74M67 272.5H74M67 269.5H74M67 266.5H74M67 263.5H74M57 260.5H74M67 257.5H74M67 254.5H74M67 251.5H74M67 248.5H74M62 245.5H74M67 242.5H74M67 239.5H74M67 236.5H74M67 233.5H74M57 230.5H74M67 227.5H74M67 224.5H74M67 221.5H74M67 218.5H74M62 215.5H74M67 212.5H74M67 209.5H74M67 206.5H74M67 203.5H74M57 200.5H74M67 197.5H74M73.5 195V962" stroke="#8F8F8F" stroke-width="1" fill="none" shape-rendering="crispEdges"/>
<text x="74.3" y="188.8" font-size="9.8" fill="#2A2A2A" textLength="12.6" lengthAdjust="spacingAndGlyphs">-20</text><text x="104.3" y="188.8" font-size="9.8" fill="#2A2A2A" textLength="4.8" lengthAdjust="spacingAndGlyphs">0</text><text x="134.3" y="188.8" font-size="9.8" fill="#2A2A2A" textLength="9.6" lengthAdjust="spacingAndGlyphs">20</text><text x="164.3" y="188.8" font-size="9.8" fill="#2A2A2A" textLength="9.6" lengthAdjust="spacingAndGlyphs">40</text><text x="194.3" y="188.8" font-size="9.8" fill="#2A2A2A" textLength="9.6" lengthAdjust="spacingAndGlyphs">60</text><text x="224.3" y="188.8" font-size="9.8" fill="#2A2A2A" textLength="9.6" lengthAdjust="spacingAndGlyphs">80</text><text x="254.3" y="188.8" font-size="9.8" fill="#2A2A2A" textLength="14.4" lengthAdjust="spacingAndGlyphs">100</text><text x="284.3" y="188.8" font-size="9.8" fill="#2A2A2A" textLength="14.4" lengthAdjust="spacingAndGlyphs">120</text><text x="314.3" y="188.8" font-size="9.8" fill="#2A2A2A" textLength="14.4" lengthAdjust="spacingAndGlyphs">140</text><text x="344.3" y="188.8" font-size="9.8" fill="#2A2A2A" textLength="14.4" lengthAdjust="spacingAndGlyphs">160</text><text x="374.3" y="188.8" font-size="9.8" fill="#2A2A2A" textLength="14.4" lengthAdjust="spacingAndGlyphs">180</text><text x="404.3" y="188.8" font-size="9.8" fill="#2A2A2A" textLength="14.4" lengthAdjust="spacingAndGlyphs">200</text><text x="434.3" y="188.8" font-size="9.8" fill="#2A2A2A" textLength="14.4" lengthAdjust="spacingAndGlyphs">220</text><text x="464.3" y="188.8" font-size="9.8" fill="#2A2A2A" textLength="14.4" lengthAdjust="spacingAndGlyphs">240</text><text x="494.3" y="188.8" font-size="9.8" fill="#2A2A2A" textLength="14.4" lengthAdjust="spacingAndGlyphs">260</text><text x="524.3" y="188.8" font-size="9.8" fill="#2A2A2A" textLength="14.4" lengthAdjust="spacingAndGlyphs">280</text><text x="554.3" y="188.8" font-size="9.8" fill="#2A2A2A" textLength="14.4" lengthAdjust="spacingAndGlyphs">300</text><text x="584.3" y="188.8" font-size="9.8" fill="#2A2A2A" textLength="14.4" lengthAdjust="spacingAndGlyphs">320</text><text x="614.3" y="188.8" font-size="9.8" fill="#2A2A2A" textLength="14.4" lengthAdjust="spacingAndGlyphs">340</text><text x="644.3" y="188.8" font-size="9.8" fill="#2A2A2A" textLength="14.4" lengthAdjust="spacingAndGlyphs">360</text><text x="674.3" y="188.8" font-size="9.8" fill="#2A2A2A" textLength="14.4" lengthAdjust="spacingAndGlyphs">380</text><text x="704.3" y="188.8" font-size="9.8" fill="#2A2A2A" textLength="14.4" lengthAdjust="spacingAndGlyphs">400</text><text x="734.3" y="188.8" font-size="9.8" fill="#2A2A2A" textLength="14.4" lengthAdjust="spacingAndGlyphs">420</text><text x="764.3" y="188.8" font-size="9.8" fill="#2A2A2A" textLength="14.4" lengthAdjust="spacingAndGlyphs">440</text><text x="794.3" y="188.8" font-size="9.8" fill="#2A2A2A" textLength="14.4" lengthAdjust="spacingAndGlyphs">460</text><text x="824.3" y="188.8" font-size="9.8" fill="#2A2A2A" textLength="14.4" lengthAdjust="spacingAndGlyphs">480</text><text x="854.3" y="188.8" font-size="9.8" fill="#2A2A2A" textLength="14.4" lengthAdjust="spacingAndGlyphs">500</text><text x="884.3" y="188.8" font-size="9.8" fill="#2A2A2A" textLength="14.4" lengthAdjust="spacingAndGlyphs">520</text><text x="914.3" y="188.8" font-size="9.8" fill="#2A2A2A" textLength="14.4" lengthAdjust="spacingAndGlyphs">540</text><text x="944.3" y="188.8" font-size="9.8" fill="#2A2A2A" textLength="14.4" lengthAdjust="spacingAndGlyphs">560</text><text x="974.3" y="188.8" font-size="9.8" fill="#2A2A2A" textLength="14.4" lengthAdjust="spacingAndGlyphs">580</text><text x="1004.3" y="188.8" font-size="9.8" fill="#2A2A2A" textLength="14.4" lengthAdjust="spacingAndGlyphs">600</text><text x="1034.3" y="188.8" font-size="9.8" fill="#2A2A2A" textLength="14.4" lengthAdjust="spacingAndGlyphs">620</text><text x="1064.3" y="188.8" font-size="9.8" fill="#2A2A2A" textLength="14.4" lengthAdjust="spacingAndGlyphs">640</text><text x="1094.3" y="188.8" font-size="9.8" fill="#2A2A2A" textLength="14.4" lengthAdjust="spacingAndGlyphs">660</text><text x="1124.3" y="188.8" font-size="9.8" fill="#2A2A2A" textLength="14.4" lengthAdjust="spacingAndGlyphs">680</text><text x="1154.3" y="188.8" font-size="9.8" fill="#2A2A2A" textLength="14.4" lengthAdjust="spacingAndGlyphs">700</text><text x="1184.3" y="188.8" font-size="9.8" fill="#2A2A2A" textLength="14.4" lengthAdjust="spacingAndGlyphs">720</text><text x="1214.3" y="188.8" font-size="9.8" fill="#2A2A2A" textLength="14.4" lengthAdjust="spacingAndGlyphs">740</text><text x="1244.3" y="188.8" font-size="9.8" fill="#2A2A2A" textLength="14.4" lengthAdjust="spacingAndGlyphs">760</text><text x="1274.3" y="188.8" font-size="9.8" fill="#2A2A2A" textLength="14.4" lengthAdjust="spacingAndGlyphs">780</text><text x="1304.3" y="188.8" font-size="9.8" fill="#2A2A2A" textLength="14.4" lengthAdjust="spacingAndGlyphs">800</text><text x="1334.3" y="188.8" font-size="9.8" fill="#2A2A2A" textLength="14.4" lengthAdjust="spacingAndGlyphs">820</text><text x="1364.3" y="188.8" font-size="9.8" fill="#2A2A2A" textLength="14.4" lengthAdjust="spacingAndGlyphs">840</text><text x="1394.3" y="188.8" font-size="9.8" fill="#2A2A2A" textLength="14.4" lengthAdjust="spacingAndGlyphs">860</text><text x="1424.3" y="188.8" font-size="9.8" fill="#2A2A2A" textLength="14.4" lengthAdjust="spacingAndGlyphs">880</text><text x="1454.3" y="188.8" font-size="9.8" fill="#2A2A2A" textLength="14.4" lengthAdjust="spacingAndGlyphs">900</text><text x="0" y="0" font-size="9.8" fill="#2A2A2A" textLength="13.0" lengthAdjust="spacingAndGlyphs" transform="translate(66,951.8) rotate(-90)" text-anchor="end">-20</text><text x="0" y="0" font-size="9.8" fill="#2A2A2A" textLength="5.0" lengthAdjust="spacingAndGlyphs" transform="translate(66,921.8) rotate(-90)" text-anchor="end">0</text><text x="0" y="0" font-size="9.8" fill="#2A2A2A" textLength="10.0" lengthAdjust="spacingAndGlyphs" transform="translate(66,891.8) rotate(-90)" text-anchor="end">20</text><text x="0" y="0" font-size="9.8" fill="#2A2A2A" textLength="10.0" lengthAdjust="spacingAndGlyphs" transform="translate(66,861.8) rotate(-90)" text-anchor="end">40</text><text x="0" y="0" font-size="9.8" fill="#2A2A2A" textLength="10.0" lengthAdjust="spacingAndGlyphs" transform="translate(66,831.8) rotate(-90)" text-anchor="end">60</text><text x="0" y="0" font-size="9.8" fill="#2A2A2A" textLength="10.0" lengthAdjust="spacingAndGlyphs" transform="translate(66,801.8) rotate(-90)" text-anchor="end">80</text><text x="0" y="0" font-size="9.8" fill="#2A2A2A" textLength="15.0" lengthAdjust="spacingAndGlyphs" transform="translate(66,771.8) rotate(-90)" text-anchor="end">100</text><text x="0" y="0" font-size="9.8" fill="#2A2A2A" textLength="15.0" lengthAdjust="spacingAndGlyphs" transform="translate(66,741.8) rotate(-90)" text-anchor="end">120</text><text x="0" y="0" font-size="9.8" fill="#2A2A2A" textLength="15.0" lengthAdjust="spacingAndGlyphs" transform="translate(66,711.8) rotate(-90)" text-anchor="end">140</text><text x="0" y="0" font-size="9.8" fill="#2A2A2A" textLength="15.0" lengthAdjust="spacingAndGlyphs" transform="translate(66,681.8) rotate(-90)" text-anchor="end">160</text><text x="0" y="0" font-size="9.8" fill="#2A2A2A" textLength="15.0" lengthAdjust="spacingAndGlyphs" transform="translate(66,651.8) rotate(-90)" text-anchor="end">180</text><text x="0" y="0" font-size="9.8" fill="#2A2A2A" textLength="15.0" lengthAdjust="spacingAndGlyphs" transform="translate(66,621.8) rotate(-90)" text-anchor="end">200</text><text x="0" y="0" font-size="9.8" fill="#2A2A2A" textLength="15.0" lengthAdjust="spacingAndGlyphs" transform="translate(66,591.8) rotate(-90)" text-anchor="end">220</text><text x="0" y="0" font-size="9.8" fill="#2A2A2A" textLength="15.0" lengthAdjust="spacingAndGlyphs" transform="translate(66,561.8) rotate(-90)" text-anchor="end">240</text><text x="0" y="0" font-size="9.8" fill="#2A2A2A" textLength="15.0" lengthAdjust="spacingAndGlyphs" transform="translate(66,531.8) rotate(-90)" text-anchor="end">260</text><text x="0" y="0" font-size="9.8" fill="#2A2A2A" textLength="15.0" lengthAdjust="spacingAndGlyphs" transform="translate(66,501.8) rotate(-90)" text-anchor="end">280</text><text x="0" y="0" font-size="9.8" fill="#2A2A2A" textLength="15.0" lengthAdjust="spacingAndGlyphs" transform="translate(66,471.8) rotate(-90)" text-anchor="end">300</text><text x="0" y="0" font-size="9.8" fill="#2A2A2A" textLength="15.0" lengthAdjust="spacingAndGlyphs" transform="translate(66,441.8) rotate(-90)" text-anchor="end">320</text><text x="0" y="0" font-size="9.8" fill="#2A2A2A" textLength="15.0" lengthAdjust="spacingAndGlyphs" transform="translate(66,411.8) rotate(-90)" text-anchor="end">340</text><text x="0" y="0" font-size="9.8" fill="#2A2A2A" textLength="15.0" lengthAdjust="spacingAndGlyphs" transform="translate(66,381.8) rotate(-90)" text-anchor="end">360</text><text x="0" y="0" font-size="9.8" fill="#2A2A2A" textLength="15.0" lengthAdjust="spacingAndGlyphs" transform="translate(66,351.8) rotate(-90)" text-anchor="end">380</text><text x="0" y="0" font-size="9.8" fill="#2A2A2A" textLength="15.0" lengthAdjust="spacingAndGlyphs" transform="translate(66,321.8) rotate(-90)" text-anchor="end">400</text><text x="0" y="0" font-size="9.8" fill="#2A2A2A" textLength="15.0" lengthAdjust="spacingAndGlyphs" transform="translate(66,291.8) rotate(-90)" text-anchor="end">420</text><text x="0" y="0" font-size="9.8" fill="#2A2A2A" textLength="15.0" lengthAdjust="spacingAndGlyphs" transform="translate(66,261.8) rotate(-90)" text-anchor="end">440</text><text x="0" y="0" font-size="9.8" fill="#2A2A2A" textLength="15.0" lengthAdjust="spacingAndGlyphs" transform="translate(66,231.8) rotate(-90)" text-anchor="end">460</text><text x="0" y="0" font-size="9.8" fill="#2A2A2A" textLength="15.0" lengthAdjust="spacingAndGlyphs" transform="translate(66,201.8) rotate(-90)" text-anchor="end">480</text>
<path d="M65.5 181V193M59 187.5H72" stroke="#D0D0D0" stroke-width="1" shape-rendering="crispEdges"/>
<rect x="1474" y="195" width="15" height="765" fill="#D9D9D9"/>
<rect x="1474.5" y="181.5" width="14" height="14" fill="#FFFFFF" stroke="#ABABAB"/>
<path d="M1477.5 191.5L1481.5 186.5L1485.5 191.5Z" fill="#606060"/>
<rect x="1474.5" y="945.5" width="14" height="14" fill="#FFFFFF" stroke="#ABABAB"/>
<path d="M1477.5 950.5L1481.5 955L1485.5 950.5Z" fill="#606060"/>
<rect x="1474.5" y="394.5" width="14" height="363" fill="#FFFFFF" stroke="#ABABAB"/>
<rect x="59" y="963" width="1412" height="15" fill="#D9D9D9"/>
<rect x="59.5" y="963.5" width="14" height="14" fill="#FFFFFF" stroke="#ABABAB"/>
<path d="M69 966.5L64 970.5L69 974.5Z" fill="#606060"/>
<rect x="1456.5" y="963.5" width="14" height="14" fill="#FFFFFF" stroke="#ABABAB"/>
<path d="M1461.5 966.5L1466 970.5L1461.5 974.5Z" fill="#606060"/>
<rect x="510.5" y="963.5" width="506" height="14" fill="#FFFFFF" stroke="#ABABAB"/>
<defs><pattern id="chk" x="0" y="0" width="2" height="2" patternUnits="userSpaceOnUse"><rect width="1" height="1" fill="#333"/><rect x="1" y="1" width="1" height="1" fill="#333"/></pattern><pattern id="hat" x="0" y="0" width="5.5" height="5.5" patternUnits="userSpaceOnUse" patternTransform="rotate(45)"><rect x="0" y="0" width="1" height="5.5" fill="#444"/></pattern></defs>
<rect x="145.5" y="448.5" width="315" height="445" fill="none" stroke="#12107E" stroke-width="1" shape-rendering="crispEdges"/>
<path d="M176.5 456.5H453.5V886.5H158.5V759.5H176.5M176.5 456.5V886.5M158.5 759.5V886.5M165.5 759.5V886.5M158.5 796.5H176.5M158.5 849.5H176.5M176.5 804.5H453.5M176.5 841.5H453.5M176.5 811.5H274.5M176.5 818.5H274.5M176.5 826.5H274.5M176.5 834.5H274.5M176.5 849.5H274.5M176.5 856.5H274.5M176.5 864.5H274.5M176.5 871.5H274.5M176.5 879.5H274.5M274.5 819.5H453.5M274.5 864.5H453.5M379.5 849.5H453.5M191.5 804.5V841.5M221.5 804.5V841.5M206.5 804.5V886.5M236.5 804.5V886.5M259.5 804.5V886.5M274.5 804.5V886.5M379.5 841.5V886.5M401.5 841.5V864.5M424.5 841.5V864.5" stroke="#000000" stroke-width="1.1" fill="none" shape-rendering="crispEdges"/>
<g fill="url(#chk)"><rect x="160" y="767" width="5" height="22"/><rect x="160" y="811" width="5" height="27"/><rect x="160" y="856" width="5" height="24"/></g>
<text x="191.3" y="479" font-size="5.6" fill="#1E1E1E" textLength="29.8" lengthAdjust="spacingAndGlyphs">Описание:</text>
<text x="191.3" y="488" font-size="5.6" fill="#1E1E1E" textLength="72.7" lengthAdjust="spacingAndGlyphs">Чертеж вентиля 998-20-0</text>
<text x="191.3" y="497" font-size="5.6" fill="#1E1E1E" textLength="185.3" lengthAdjust="spacingAndGlyphs">Н1 Чертеж запорного вентиля модели 998_20_0 в масштабе 1:1</text>
<text x="191.3" y="506" font-size="5.6" fill="#1E1E1E" textLength="244.1" lengthAdjust="spacingAndGlyphs">В документации представлен полномасштабный (1:1) габаритно_размерный чертёж</text>
<text x="191.3" y="515.5" font-size="5.6" fill="#1E1E1E" textLength="240.2" lengthAdjust="spacingAndGlyphs">запорного вентиля под обозначением 998_20_0 и его технические характеристики.</text>
<text x="191.3" y="524.5" font-size="5.6" fill="#1E1E1E" textLength="125.7" lengthAdjust="spacingAndGlyphs">Н2 Назначение запорного вентиля 998 20 0</text>
<text x="191.3" y="534" font-size="5.6" fill="#1E1E1E" textLength="232.1" lengthAdjust="spacingAndGlyphs">Данное устройство относится к классу запорной арматуры и предназначено для</text>
<text x="191.3" y="543.8" font-size="5.6" fill="#1E1E1E" textLength="249.9" lengthAdjust="spacingAndGlyphs">оперативного управления потоками рабочих сред – воды и пара – в вспомогательных</text>
<text x="191.3" y="553" font-size="5.6" fill="#1E1E1E" textLength="220.1" lengthAdjust="spacingAndGlyphs">трубопроводных системах тепловых электростанций. Вентиль рассчитан на</text>
<text x="191.3" y="561.8" font-size="5.6" fill="#1E1E1E" textLength="257.0" lengthAdjust="spacingAndGlyphs">эксплуатацию в условиях высоких и сверхвысоких параметров давления и температуры,</text>
<text x="191.3" y="571" font-size="5.6" fill="#1E1E1E" textLength="141.8" lengthAdjust="spacingAndGlyphs">характерных для энергетического оборудования.</text>
<text x="191.3" y="581" font-size="5.6" fill="#1E1E1E" textLength="248.9" lengthAdjust="spacingAndGlyphs">Ключевая функция изделия – полное перекрытие или возобновление подачи среды в</text>
<text x="191.3" y="590" font-size="5.6" fill="#1E1E1E" textLength="241.3" lengthAdjust="spacingAndGlyphs">трубопроводе. Конструкция обеспечивает надёжное двухпозиционное управление:</text>
<text x="191.3" y="599" font-size="5.6" fill="#1E1E1E" textLength="225.9" lengthAdjust="spacingAndGlyphs">«открыто»/«закрыто», что делает вентиль важным элементом безопасности и</text>
<text x="191.3" y="608" font-size="5.6" fill="#1E1E1E" textLength="142.9" lengthAdjust="spacingAndGlyphs">регулирования на объектах тепловой энергетики.</text>
<rect x="191" y="479.6" width="30" height="0.7" fill="#333"/>
<text x="177.3" y="839.5" font-size="4" fill="#1E1E1E" textLength="10" lengthAdjust="spacingAndGlyphs" font-weight="bold">Изм.</text>
<text x="192" y="839.5" font-size="4" fill="#1E1E1E" textLength="13" lengthAdjust="spacingAndGlyphs" font-weight="bold">Кол.уч.</text>
<text x="208.5" y="839.5" font-size="4" fill="#1E1E1E" textLength="9" lengthAdjust="spacingAndGlyphs" font-weight="bold">Лист</text>
<text x="222" y="839.5" font-size="4" fill="#1E1E1E" textLength="12" lengthAdjust="spacingAndGlyphs" font-weight="bold">№ док.</text>
<text x="238" y="839.5" font-size="4" fill="#1E1E1E" textLength="17" lengthAdjust="spacingAndGlyphs" font-weight="bold">Подпись</text>
<text x="261" y="839.5" font-size="4" fill="#1E1E1E" textLength="10" lengthAdjust="spacingAndGlyphs" font-weight="bold">Дата</text>
<text x="177.6" y="846.3" font-size="5" fill="#1E1E1E" textLength="26.5" lengthAdjust="spacingAndGlyphs">Разработал</text>
<text x="177.6" y="854" font-size="5" fill="#1E1E1E" textLength="21" lengthAdjust="spacingAndGlyphs">Проверил</text>
<text x="177.6" y="876.5" font-size="5" fill="#1E1E1E" textLength="25" lengthAdjust="spacingAndGlyphs">Н.контроль</text>
<text x="177.6" y="884" font-size="5" fill="#1E1E1E" textLength="20" lengthAdjust="spacingAndGlyphs">Утвердил</text>
<text x="390.5" y="847.6" font-size="5" fill="#1E1E1E" text-anchor="middle" textLength="16" lengthAdjust="spacingAndGlyphs">Стадия</text>
<text x="413" y="847.6" font-size="5" fill="#1E1E1E" text-anchor="middle" textLength="10" lengthAdjust="spacingAndGlyphs">Лист</text>
<text x="439" y="847.6" font-size="5" fill="#1E1E1E" text-anchor="middle" textLength="14" lengthAdjust="spacingAndGlyphs">Листов</text>
<text x="390.5" y="858" font-size="5" fill="#555" text-anchor="middle">Р</text>
<text x="413" y="858" font-size="5" fill="#555" text-anchor="middle">1.1</text>
<text x="439" y="858" font-size="5" fill="#555" text-anchor="middle">2</text>
<text x="326.5" y="878.8" font-size="6.5" fill="#1E1E1E" text-anchor="middle" textLength="43" lengthAdjust="spacingAndGlyphs">Общие данные</text>
<text x="391" y="892.5" font-size="3.8" fill="#1E1E1E" text-anchor="middle" textLength="20" lengthAdjust="spacingAndGlyphs" font-weight="bold">Формат А4</text>
<rect x="498.5" y="264.5" width="891" height="630" fill="none" stroke="#12107E" stroke-width="1" shape-rendering="crispEdges"/>
<path d="M528.5 759.5V271.5H1382.5V886.5H528.5" stroke="#505050" stroke-width="1.1" fill="none" shape-rendering="crispEdges"/>
<path d="M528.5 886.5H510.5V759.5H528.5V886.5M518.5 759.5V886.5M510.5 796.5H528.5M510.5 849.5H528.5" stroke="#151515" stroke-width="1.2" fill="none" shape-rendering="crispEdges"/>
<path d="M1104.5 863.5H1382.5M1104.5 871.5H1202.5M1104.5 878.5H1202.5M1367.5 874.5H1382.5M1104.5 863.5V886.5M1119.5 863.5V886.5M1134.5 863.5V886.5M1149.5 863.5V886.5M1164.5 863.5V886.5M1187.5 863.5V886.5M1202.5 863.5V886.5M1367.5 863.5V886.5" stroke="#3A3A3A" stroke-width="1" fill="none" shape-rendering="crispEdges"/>
<g fill="url(#chk)" opacity="0.8"><rect x="512" y="767" width="5" height="23"/><rect x="512" y="811" width="5" height="27"/><rect x="512" y="855" width="5" height="25"/></g>
<text x="1105.5" y="883.5" font-size="3.8" fill="#1E1E1E" textLength="9" lengthAdjust="spacingAndGlyphs" font-weight="bold">Изм.</text>
<text x="1120.5" y="883.5" font-size="3.8" fill="#1E1E1E" textLength="13" lengthAdjust="spacingAndGlyphs" font-weight="bold">Кол.уч.</text>
<text x="1135.5" y="883.5" font-size="3.8" fill="#1E1E1E" textLength="9" lengthAdjust="spacingAndGlyphs" font-weight="bold">Лист</text>
<text x="1150.5" y="883.5" font-size="3.8" fill="#1E1E1E" textLength="12" lengthAdjust="spacingAndGlyphs" font-weight="bold">№ док.</text>
<text x="1165.5" y="883.5" font-size="3.8" fill="#1E1E1E" textLength="17" lengthAdjust="spacingAndGlyphs" font-weight="bold">Подпись</text>
<text x="1188.5" y="883.5" font-size="3.8" fill="#1E1E1E" textLength="10" lengthAdjust="spacingAndGlyphs" font-weight="bold">Дата</text>
<text x="1375" y="870.5" font-size="4.5" fill="#555" text-anchor="middle" textLength="9" lengthAdjust="spacingAndGlyphs">Лист</text>
<text x="1375" y="882" font-size="4.5" fill="#555" text-anchor="middle" textLength="6" lengthAdjust="spacingAndGlyphs">1.2</text>
<text x="1319.4" y="891.8" font-size="3.8" fill="#1E1E1E" text-anchor="middle" textLength="20" lengthAdjust="spacingAndGlyphs" font-weight="bold">Формат А3</text>
<text x="1104.1" y="780.8" font-size="6.1" fill="#1E1E1E" textLength="72.4" lengthAdjust="spacingAndGlyphs">Технические параметры:</text>
<text x="1104.1" y="795.8" font-size="6.1" fill="#1E1E1E" textLength="69.9" lengthAdjust="spacingAndGlyphs">Обозначение - 998-20-0.</text>
<text x="1104.1" y="807.8" font-size="6.1" fill="#1E1E1E" textLength="76.4" lengthAdjust="spacingAndGlyphs">Условный проход, DN - 20.</text>
<text x="1104.1" y="819.8" font-size="6.1" fill="#1E1E1E" textLength="87.9" lengthAdjust="spacingAndGlyphs">Рабочая среда - вода или пар.</text>
<text x="1104.1" y="831.8" font-size="6.1" fill="#1E1E1E" textLength="175.4" lengthAdjust="spacingAndGlyphs">Давление рабочей среды, МПа - 37,3 для воды, 25 для пара.</text>
<text x="1104.1" y="843.8" font-size="6.1" fill="#1E1E1E" textLength="181.4" lengthAdjust="spacingAndGlyphs">Температура рабочей среды, °С - 280 для воды, 545 для пара.</text>
<rect x="1104" y="784.2" width="74" height="1" fill="#333"/>
<text x="838.7" y="292.5" font-size="5.6" fill="#1E1E1E" text-anchor="middle" textLength="80" lengthAdjust="spacingAndGlyphs">Вентиль запорный 998-20-0</text>
<text x="838.7" y="299" font-size="5.6" fill="#1E1E1E" text-anchor="middle" textLength="13" lengthAdjust="spacingAndGlyphs">М1:1</text>
<path d="M800.3 691.5V714C800 723 792 730 777.3 730L729.6 718.2L720.3 727.6V761.9L729.2 773.1L820.6 797.7L826.5 813.2L838.3 815.4L850.5 812.7L853.2 795.6L868.9 775.9C871 768 872 762 874.2 759.8L882.2 752.3H884.9L951.2 766.2L959.2 757.7V722.9L952.2 713.3L883.3 695.7L880.1 691.6ZM824.1 691.5V758.4L720.3 731.5V761.9L822.2 788.1H844.7L854.4 776.5V729.4L959.2 757.7V726.1L854.4 698.9V691.5Z" fill="url(#hat)" fill-rule="evenodd" stroke="none"/>
<path d="M800.3 691.5V714C800 723 792 730 777.3 730L729.6 718.2L720.3 727.6V761.9L729.2 773.1L820.6 797.7L826.5 813.2L838.3 815.4L850.5 812.7L853.2 795.6L868.9 775.9C871 768 872 762 874.2 759.8L882.2 752.3H884.9L951.2 766.2L959.2 757.7V722.9L952.2 713.3L883.3 695.7L880.1 691.6Z" fill="none" stroke="#4A4A4A" stroke-width="1.1" stroke-linejoin="round"/>
<path d="M824.1 691.5V758.4M854.4 698.9V776.5M844.7 788.1L854.4 776.5" fill="none" stroke="#4A4A4A" stroke-width="1.1" stroke-dasharray="2.6 1.4"/>
<path d="M723.1 732.2L824.1 758.4M721.2 761.9L822.2 788.1H844.7M854.4 729.4L956.5 756.1M854.4 698.9L959.2 726.1" fill="none" stroke="#4A4A4A" stroke-width="0.7" stroke-dasharray="1.5 2" opacity="0.8"/>
<path d="M882.2 752.3L853.2 795.6" fill="none" stroke="#4A4A4A" stroke-width="0.6" opacity="0.6"/>
<path d="M824.3 420.2H802.4V431.6L775 454C767 461 764 467 764 474.9V621.8C764 634 770 640 777.5 646L794.3 662.2V685.4L797.9 691.6H881.1L884.7 685.4V662.2L901.5 646C909 640 915 634 915 621.8V474.9C915 467 912 461 904 454L876.6 431.6V420.2H854.5" fill="none" stroke="#4A4A4A" stroke-width="1.1" stroke-linejoin="round"/>
<path d="M824.3 398.6V489.2L829.4 497.7V505.2M854.5 398.6V489.2L849.8 497.7V505.2M824.3 489.2H854.5M829.4 497.7H849.8M824.3 477.6H796.3Q791.3 477.6 791.3 482.6V621L799.5 627.5H816.7V613.6H812.6V606.3H807.2L802.5 599.8V574.5H826.5V561.4H852.6V574.5H876.7V599.8L872 606.3H866.6V613.6H862.3V627.5H879.5L887.6 621V482.6Q887.6 477.6 882.6 477.6H854.5M797.2 557.3V510.2Q797.2 505.2 802.2 505.2H876.8Q881.8 505.2 881.8 510.2V557.3H797.2M830.5 557.3V561.4M848.5 557.3V561.4M791.3 520Q795 519 797.2 516M791.3 543Q795 544 797.2 547M689.3 380.3H989.2V398.6H689.3ZM819.5 380.3V376.5H858.6V380.3M822.5 376.5V362.2H856.6V376.5M829.3 362.2V376.5M849.7 362.2V376.5M826.2 362.2V359.5L828.2 356.3H849.7L852.4 359.5V362.2M826.2 359.5H852.4" fill="none" stroke="#4A4A4A" stroke-width="1.1" stroke-linejoin="round"/>
<g fill="none" stroke="#1C1CA0" stroke-width="1.1"><circle cx="807.6" cy="530" r="5.3"/><circle cx="871.3" cy="530" r="5.3"/><path d="M800.3 530H814.9M807.6 521V539M864 530H878.6M871.3 521V539"/></g>
<path d="M839.5 346V832" fill="none" stroke="#1C1CA0" stroke-width="1.2" stroke-dasharray="7.5 4.2 0.8 4.5"/>
<path d="M783.2 694L971.5 744.1M708 743.7L880.4 788.2" fill="none" stroke="#1C1CA0" stroke-width="1.2" stroke-dasharray="7.5 4.2 0.8 4.5"/>
<path d="M689.3 329.8H989.2M689.3 323.3V377.4M989.2 323.3V377.4M644.8 356.3H825.9M651.3 356.3V815.5M644.9 746.2H716.3M644.9 815.5H838M720.3 748V846.3M959.5 744V846.3M720.3 840.3H959.5M739.3 477.6H809.8M739.3 505.2H809.8M745.6 477.6V505.2M961.8 727.4H991.8M961.8 757.4H991.8M985.6 727.4V757.4" fill="none" stroke="#111111" stroke-width="1.25"/>
<path d="M689.9 329.8L693.5 328.6V331.0ZM988.6 329.8L985.0 328.6V331.0ZM720.9 840.3L724.5 839.0999999999999V841.5ZM958.9 840.3L955.3 839.0999999999999V841.5ZM651.3 356.90000000000003L650.0999999999999 360.5H652.5ZM651.3 745.6L650.0999999999999 742.0H652.5ZM651.3 746.8000000000001L650.0999999999999 750.4000000000001H652.5ZM651.3 814.9L650.0999999999999 811.3H652.5ZM745.6 478.20000000000005L744.4 481.8H746.8000000000001ZM745.6 504.59999999999997L744.4 501.0H746.8000000000001ZM985.6 728.0L984.4 731.6H986.8000000000001ZM985.6 756.8L984.4 753.1999999999999H986.8000000000001Z" fill="#111"/>
<text x="838.7" y="326" font-size="5.8" fill="#3A3A3A" text-anchor="middle" textLength="20" lengthAdjust="spacingAndGlyphs">200,00</text>
<text x="838.2" y="836.8" font-size="5.8" fill="#3A3A3A" text-anchor="middle" textLength="20" lengthAdjust="spacingAndGlyphs">160,00</text>
<text x="0" y="0" font-size="5.8" fill="#3A3A3A" text-anchor="middle" textLength="20" lengthAdjust="spacingAndGlyphs" transform="translate(647.2,549.8) rotate(-90)">260,00</text>
<text x="0" y="0" font-size="5.8" fill="#3A3A3A" text-anchor="middle" textLength="16" lengthAdjust="spacingAndGlyphs" transform="translate(647.2,780.4) rotate(-90)">45,00</text>
<text x="0" y="0" font-size="5.8" fill="#3A3A3A" text-anchor="middle" textLength="16" lengthAdjust="spacingAndGlyphs" transform="translate(742,491.4) rotate(-90)">18,00</text>
<text x="0" y="0" font-size="5.8" fill="#3A3A3A" text-anchor="middle" textLength="16" lengthAdjust="spacingAndGlyphs" transform="translate(981.5,741.6) rotate(-90)">20,00</text></svg></body></html>
